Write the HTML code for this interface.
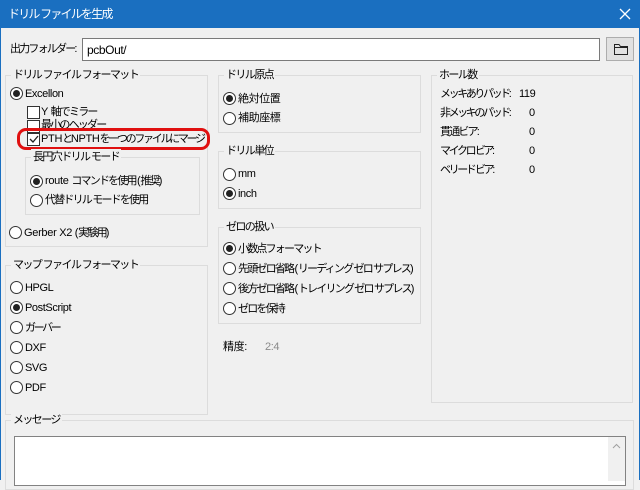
<!DOCTYPE html>
<html><head><meta charset="utf-8"><style>
*{box-sizing:border-box;margin:0;padding:0}
body{width:640px;height:480px;overflow:hidden;background:#f0f0f0;font-family:"Liberation Sans","Noto Sans CJK JP",sans-serif;font-size:11px;color:#000;position:relative}
.a{position:absolute;white-space:nowrap}
.title{left:0;top:0;width:640px;height:28px;background:#1a6fc0;color:#fff}
.g{position:absolute;border:1px solid #dcdcdc}
.gl{position:absolute;background:#f0f0f0;padding:0 2px;top:-9px;left:5px;line-height:16px;white-space:nowrap;letter-spacing:-1.6px}
.r{position:absolute;width:13px;height:13px;border:1px solid #333;border-radius:50%;background:#fff}
.r.on::after{content:"";position:absolute;left:2px;top:2px;width:7px;height:7px;border-radius:50%;background:#222}
.c{position:absolute;width:13px;height:13px;border:1px solid #333;background:#fff}
.t{position:absolute;white-space:nowrap;line-height:16px;letter-spacing:-0.4px}
.j{letter-spacing:-1.8px}
.k{letter-spacing:-2.4px}
i{font-style:normal;letter-spacing:-0.3px}
</style></head><body>
<div class="a title"><span class="t j" style="left:8px;top:6px;color:#fff;font-size:12px">ドリル ファイルを生成</span>
<svg class="a" style="left:619px;top:8px" width="12" height="12"><path d="M1 1L11 11M11 1L1 11" stroke="#fff" stroke-width="1.3"/></svg></div>
<div class="a" style="left:0;top:28px;width:1px;height:452px;background:#1a6fc0"></div>
<div class="a" style="left:639px;top:28px;width:1px;height:452px;background:#1a6fc0"></div>

<span class="t j" style="left:10px;top:41px">出力フォルダー:</span>
<div class="a" style="left:82px;top:38px;width:518px;height:23px;border:1px solid #7a7a7a;background:#fff"><span class="t" style="left:4px;top:3px;font-size:12px">pcbOut/</span></div>
<div class="a" style="left:606px;top:37px;width:28px;height:24px;border:1px solid #adadad;background:#e1e1e1">
<svg class="a" style="left:7px;top:5px" width="14" height="12"><path d="M0.5 2.5V11.5H13.5V3.5H6.5L5 1.5H0.5Z M0.5 4.5H13.5" fill="none" stroke="#222"/></svg></div>

<div class="g" style="left:5px;top:75px;width:203px;height:172px"><span class="gl">ドリル ファイル フォーマット</span></div>
<div class="r on" style="left:10px;top:87px"></div><span class="t" style="left:25px;top:86px">Excellon</span>
<div class="c" style="left:27px;top:106px"></div><span class="t j" style="left:41px;top:104px"><i>Y </i>軸でミラー</span>
<div class="c" style="left:27px;top:120px"></div><span class="t j" style="left:41px;top:117px">最小のヘッダー</span>
<div class="a" style="left:17px;top:128px;width:193px;height:22px;border:3px solid #e01010;border-radius:9px"></div>
<div class="c" style="left:27px;top:133px"></div><svg class="a" style="left:29px;top:135px" width="10" height="9"><path d="M1 4L4 7L9 1" fill="none" stroke="#222" stroke-width="1.3"/></svg>
<span class="t" style="left:41px;top:131px;letter-spacing:-2.3px"><i>PTH</i>と<i>NPTH</i>を一つのファイルにマージ</span>
<div class="g" style="left:25px;top:157px;width:175px;height:58px"><span class="gl">長円穴ドリル モード</span></div>
<div class="r on" style="left:30px;top:175px"></div><span class="t j" style="left:45px;top:173px"><i>route </i>コマンドを使用 <i>(</i>推奨<i>)</i></span>
<div class="r" style="left:30px;top:194px"></div><span class="t j" style="left:45px;top:192px">代替ドリル モードを使用</span>
<div class="r" style="left:9px;top:226px"></div><span class="t j" style="left:24px;top:225px"><i>Gerber X2 (</i>実験用<i>)</i></span>

<div class="g" style="left:5px;top:265px;width:203px;height:150px"><span class="gl">マップ ファイル フォーマット</span></div>
<div class="r" style="left:10px;top:281px"></div><span class="t" style="left:25px;top:280px">HPGL</span>
<div class="r on" style="left:10px;top:301px"></div><span class="t" style="left:25px;top:300px">PostScript</span>
<div class="r" style="left:10px;top:321px"></div><span class="t k" style="left:25px;top:320px">ガーバー</span>
<div class="r" style="left:10px;top:341px"></div><span class="t" style="left:25px;top:340px">DXF</span>
<div class="r" style="left:10px;top:361px"></div><span class="t" style="left:25px;top:360px">SVG</span>
<div class="r" style="left:10px;top:381px"></div><span class="t" style="left:25px;top:380px">PDF</span>

<div class="g" style="left:218px;top:75px;width:203px;height:58px"><span class="gl">ドリル原点</span></div>
<div class="r on" style="left:223px;top:92px"></div><span class="t" style="left:238px;top:91px">絶対位置</span>
<div class="r" style="left:223px;top:112px"></div><span class="t" style="left:238px;top:110px">補助座標</span>
<div class="g" style="left:218px;top:151px;width:203px;height:58px"><span class="gl">ドリル単位</span></div>
<div class="r" style="left:223px;top:168px"></div><span class="t" style="left:238px;top:166px">mm</span>
<div class="r on" style="left:223px;top:187px"></div><span class="t" style="left:238px;top:186px">inch</span>
<div class="g" style="left:218px;top:227px;width:203px;height:97px"><span class="gl">ゼロの扱い</span></div>
<div class="r on" style="left:223px;top:242px"></div><span class="t j" style="left:238px;top:241px">小数点フォーマット</span>
<div class="r" style="left:223px;top:262px"></div><span class="t j" style="left:238px;top:261px">先頭ゼロ省略 <i>(</i>リーディング ゼロ サプレス<i>)</i></span>
<div class="r" style="left:223px;top:282px"></div><span class="t j" style="left:238px;top:281px">後方ゼロ省略 <i>(</i>トレイリング ゼロ サプレス<i>)</i></span>
<div class="r" style="left:223px;top:302px"></div><span class="t j" style="left:238px;top:301px">ゼロを保持</span>
<span class="t" style="left:223px;top:339px">精度:</span><span class="t" style="left:265px;top:339px;color:#8a8a8a">2:4</span>

<div class="g" style="left:431px;top:75px;width:202px;height:328px"><span class="gl">ホール数</span></div>
<span class="t k" style="left:440px;top:86px">メッキありパッド:</span><span class="t" style="left:519px;top:86px">119</span>
<span class="t k" style="left:440px;top:105px">非メッキのパッド:</span><span class="t" style="left:529px;top:105px">0</span>
<span class="t j" style="left:440px;top:124px">貫通ビア:</span><span class="t" style="left:529px;top:124px">0</span>
<span class="t k" style="left:440px;top:143px">マイクロ ビア:</span><span class="t" style="left:529px;top:143px">0</span>
<span class="t k" style="left:440px;top:162px">ベリード ビア:</span><span class="t" style="left:529px;top:162px">0</span>

<div class="g" style="left:5px;top:420px;width:629px;height:70px"><span class="gl">メッセージ</span></div>
<div class="a" style="left:14px;top:436px;width:612px;height:50px;border:1px solid #828282;background:#fff"></div>
<div class="a" style="left:608px;top:437px;width:17px;height:44px;background:#f0f0f0"></div>
<svg class="a" style="left:612px;top:443px" width="9" height="6"><path d="M1 5L4.5 1.5L8 5" fill="none" stroke="#a0a0a0"/></svg>
</body></html>
